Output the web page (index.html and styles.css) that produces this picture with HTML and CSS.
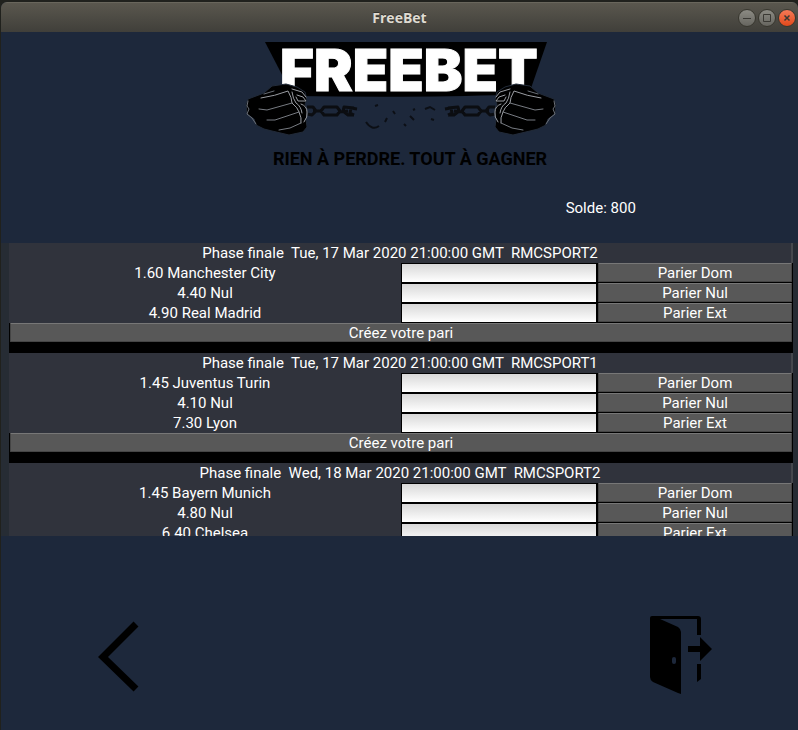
FILE: index.html
```html
<!DOCTYPE html>
<html lang="fr">
<head>
<meta charset="utf-8">
<title>FreeBet</title>
<link rel="stylesheet" href="styles.css">
</head>
<body>
<div class="window">
  <header class="titlebar">
    <h1 class="title">FreeBet</h1>
    <div class="controls">
      <button class="control" type="button" aria-label="Réduire"><svg viewBox="0 0 16 16"><path d="M4 8.500h8"/></svg></button>
      <button class="control" type="button" aria-label="Agrandir"><svg viewBox="0 0 16 16"><path d="M4.500 4.500h7v7h-7z"/></svg></button>
      <button class="control close" type="button" aria-label="Fermer"><svg viewBox="0 0 16 16"><path d="M5.500 5.500l5 5m0-5l-5 5" stroke-width="1.500"/></svg></button>
    </div>
  </header>
  <main>
    <svg class="logo" viewBox="0 0 330 140" role="img" aria-label="FreeBet">
      <defs>
        <g id="fist">
          <path d="M11 72L13 67L29 61L37 54L51 52L62 55L70 60L72 68L70 72L73 80L71 87L72 95L68 100L54 103L37 99L29 97L21 93L19 87L12 82Z" fill="#000" stroke="#222b39"/>
          <g fill="none" stroke="#9a9da3" stroke-linecap="round" stroke-linejoin="round">
            <path d="M26 66Q40 64 53 59Q57 66 57 71Q63 76 64 80Q67 86 66 91"/>
            <path d="M24 77L32 78L57 71M32 88L40 88L64 80M44 98L55 96L66 91" stroke="#777b82"/>
            <path d="M57 60Q58 67 61 71Q66 74 67 81M62 63L68 65L71 69L63 69L61 65M57 57L67 60L71 65M66 72Q72 74 72 80Q73 85 69 90"/>
            <path d="M13 69L12 74L14 77L12 82L17 86L21 92M29 62L39 59" stroke="#6b7078"/>
          </g>
        </g>
        <g id="chain" fill="none" stroke="#0b0d11" stroke-width="3" stroke-linejoin="round">
          <path d="M72 75L78 75L81 79L77 83L72 82M78 79H87"/>
          <path d="M86 79L89 75H102L105 79L102 83H89Z"/>
          <path d="M103 80L113 79M119 76L109 75L108 79L113 83L119 83M122 77L116 76L115 81L119 83"/>
        </g>
      </defs>
      <path d="M30 10H312L294 62Q200 66 58 64Z" fill="#000"/>
      <text class="wordmark" x="174" y="59" text-anchor="middle">FREEBET</text>
      <use href="#chain"/>
      <use href="#fist"/>
      <use href="#chain" transform="translate(332 0) scale(-1 1)"/>
      <use href="#fist" transform="translate(332 0) scale(-1 1)"/>
      <path d="M131 90Q137 99 144 94M152 86L150 90M158 79L160 82M190 77L195 75L200 78M178 78L180 77M140 74L143 73M169 92L171 94M175 84L179 88M196 87L199 88" fill="none" stroke="#0c0f15" stroke-width="2"/>
      <text class="tagline" x="175" y="133" text-anchor="middle">RIEN À PERDRE. TOUT À GAGNER</text>
    </svg>
    <p class="balance">Solde: 800</p>
    <div class="list-frame">
      <div class="matches">
        <section class="match">
          <h2>Phase finale  Tue, 17 Mar 2020 21:00:00 GMT  RMCSPORT2</h2>
          <div class="bet"><label for="a1">1.60 Manchester City</label><input id="a1" type="text"><button type="button">Parier Dom</button></div>
          <div class="bet"><label for="a2">4.40 Nul</label><input id="a2" type="text"><button type="button">Parier Nul</button></div>
          <div class="bet"><label for="a3">4.90 Real Madrid</label><input id="a3" type="text"><button type="button">Parier Ext</button></div>
          <button class="create" type="button">Créez votre pari</button>
        </section>
        <section class="match">
          <h2>Phase finale  Tue, 17 Mar 2020 21:00:00 GMT  RMCSPORT1</h2>
          <div class="bet"><label for="b1">1.45 Juventus Turin</label><input id="b1" type="text"><button type="button">Parier Dom</button></div>
          <div class="bet"><label for="b2">4.10 Nul</label><input id="b2" type="text"><button type="button">Parier Nul</button></div>
          <div class="bet"><label for="b3">7.30 Lyon</label><input id="b3" type="text"><button type="button">Parier Ext</button></div>
          <button class="create" type="button">Créez votre pari</button>
        </section>
        <section class="match">
          <h2>Phase finale  Wed, 18 Mar 2020 21:00:00 GMT  RMCSPORT2</h2>
          <div class="bet"><label for="c1">1.45 Bayern Munich</label><input id="c1" type="text"><button type="button">Parier Dom</button></div>
          <div class="bet"><label for="c2">4.80 Nul</label><input id="c2" type="text"><button type="button">Parier Nul</button></div>
          <div class="bet"><label for="c3">6.40 Chelsea</label><input id="c3" type="text"><button type="button">Parier Ext</button></div>
        </section>
      </div>
    </div>
    <nav class="actions">
      <button class="action" type="button" aria-label="Retour"><svg width="80" height="80" viewBox="0 0 80 80"><path d="M57 9L24 42L57 74" fill="none" stroke="#000" stroke-width="7"/></svg></button>
      <button class="action" type="button" aria-label="Quitter"><svg width="80" height="80" viewBox="0 0 80 80"><path d="M10 3Q10 1 12 1H58Q61 1 61 4V20H57V4H20L38 12Q41 14 41 17V79L38 78L13 67Q10 65 10 62ZM48 31H60V22L72 34L60 46V37H48ZM57 49H61V64L57 67Z"/><rect x="32" y="42" width="4" height="7" rx="2" fill="#1d283b"/></svg></button>
    </nav>
  </main>
</div>
</body>
</html>
```
FILE: styles.css
```css
* { box-sizing: border-box; }

body {
  margin: 0;
  min-height: 100vh;
  padding: 2px 0 0 1px;
  background: #20211d;
  color: #fff;
  font: 15px/20px Roboto, "Liberation Sans", sans-serif;
}

button, input { font: inherit; color: inherit; margin: 0; }
h1, h2, p { margin: 0; font-weight: 400; font-size: inherit; }

.window {
  min-height: calc(100vh - 2px);
  border-radius: 6px 6px 0 0;
  background: #1d283b;
  overflow: hidden;
}

.titlebar {
  display: grid;
  grid-template-columns: 1fr auto 1fr;
  align-items: center;
  height: 30px;
  padding: 0 2px;
  border-top: 1px solid #69665c;
  background: linear-gradient(#5a574e, #403f3a);
}

.title {
  grid-column: 2;
  color: #dfdbd2;
  font: 700 14px/20px "Open Sans", "Noto Sans", sans-serif;
  text-shadow: 0 -1px #33322e;
}

.controls { display: flex; justify-content: flex-end; gap: 2px; }

.control {
  width: 18px;
  height: 18px;
  padding: 0;
  border: 1px solid #38372f;
  border-radius: 50%;
  background: linear-gradient(#8c8b84, #66655f);
}

.control svg {
  display: block;
  width: 16px;
  height: 16px;
  fill: none;
  stroke: #3a3934;
}

.close { background: linear-gradient(#f57a57, #e2491b); }

.logo {
  display: block;
  width: 330px;
  height: 140px;
  margin: 0 auto;
}

.wordmark {
  font: 900 58px Inter, sans-serif;
  fill: #fff;
  stroke: #fff;
  stroke-width: 1px;
}

.tagline { font: 700 18px Roboto, sans-serif; }

.balance {
  width: 50%;
  margin: 26px 0 25px auto;
  padding-left: 4px;
  text-align: center;
}

.list-frame {
  padding: 0 5px 0 8px;
  background: #262c34;
}

.matches {
  height: 293px;
  overflow: hidden;
  background: #000;
}

.match { padding-bottom: 10px; }

.match h2 {
  height: 20px;
  background: #30333c;
  border-right: 2px solid #45484d;
  text-align: center;
  white-space: pre;
}

.bet {
  display: grid;
  grid-template-columns: 2fr 1fr 1fr;
  grid-template-rows: 20px;
}

.bet label { background: #30333c; text-align: center; }

.bet input {
  min-width: 0;
  height: 18px;
  margin: 1px;
  padding: 0 4px;
  border: 0;
  border-radius: 0;
  background: linear-gradient(#d8d8d8, #fff);
  color: #000;
  line-height: 16px;
}

.match button {
  height: 19px;
  margin: 0 1px 1px;
  padding: 0;
  border: 1px solid #454545;
  border-top-color: #777;
  border-radius: 1px;
  background: #585858;
  line-height: 18px;
}

.match .create {
  display: block;
  width: calc(100% - 2px);
}

.actions {
  display: flex;
  justify-content: space-between;
  padding: 79px 78px 35px;
}

.action { padding: 0; border: 0; background: none; }
.action svg { display: block; }
```
